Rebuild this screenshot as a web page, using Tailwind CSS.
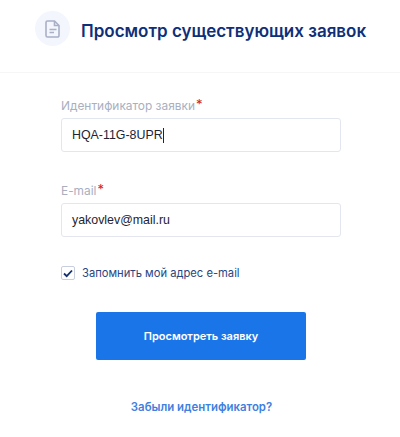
<!DOCTYPE html>
<html lang="ru">
<head>
    <meta charset="UTF-8">
    <meta name="viewport" content="width=device-width, initial-scale=1.0">
    <title>Просмотр существующих заявок</title>
    <script src="https://cdn.jsdelivr.net/npm/@tailwindcss/browser@4"></script>
</head>
<body class="bg-white font-['Inter',sans-serif] h-[437px] overflow-hidden">
    <header class="h-[73px] border-b border-[#f5f6f8] pl-[35px] pt-[11px] flex items-start">
        <div class="w-[35px] h-[35px] rounded-full bg-[#f3f6fd] flex items-center justify-center">
            <svg width="16" height="18" viewBox="0 0 16 18" fill="none" stroke="#a9b0c6" stroke-width="1.6">
                <path d="M2.5 1h7l4.5 4.5V15.5a1.5 1.5 0 0 1-1.5 1.5h-10A1.5 1.5 0 0 1 1 15.5V2.500A1.500 1.500 0 0 1 2.500 1z"/>
                <path d="M9.500 1v4.500H14"/>
                <path d="M4.500 9.500h7M4.500 12.500h4.500"/>
            </svg>
        </div>
        <h1 class="ml-[11px] mt-[9px] text-[17px] leading-[22px] font-semibold text-[#0f2f78] whitespace-nowrap">Просмотр существующих заявок</h1>
    </header>
    <form class="pl-[61px] w-[341px]">
        <label class="mt-[23px] flex items-start h-[22px] text-[11.9px] leading-[20px] text-[#a9afbf]">Идентификатор заявки<span class="text-[#d0202c] text-[13px] leading-[16px] ml-[1px]">*</span></label>
        <div class="h-[34px] border border-[#e4e6ef] rounded-[3px] pl-[10px] flex items-center text-[12.4px] text-[#1d2433] font-['Liberation_Sans',sans-serif]">HQA-11G-8UPR<span class="w-px h-[15px] bg-[#1d2433]"></span></div>
        <label class="mt-[29px] flex items-start h-[22px] text-[11.9px] leading-[20px] text-[#a9afbf]">E-mail<span class="text-[#d0202c] text-[13px] leading-[16px] ml-[1px]">*</span></label>
        <div class="h-[34px] border border-[#e4e6ef] rounded-[3px] pl-[10px] flex items-center text-[12.4px] text-[#1d2433] font-['Liberation_Sans',sans-serif]">yakovlev@mail.ru</div>
        <div class="mt-[28px] flex items-center h-[16px]">
            <span class="w-[14px] h-[14px] border border-[#c9cede] rounded-[2px] flex items-center justify-center">
                <svg width="10" height="9" viewBox="0 0 10 9" fill="none" stroke="#14306f" stroke-width="1.800"><path d="M1 4.500l2.700 2.700L9 1.500"/></svg>
            </span>
            <span class="ml-[7px] text-[11.2px] text-[#2a4580] whitespace-nowrap">Запомнить мой адрес e-mail</span>
        </div>
    </form>
    <div class="mt-[31px] flex flex-col items-center">
        <button type="button" class="ml-[2px] w-[210px] h-[48px] rounded-[2px] bg-[#1a76e8] text-white text-[11px] font-semibold">Просмотреть заявку</button>
        <a class="mt-[40px] ml-[3px] text-[11.4px] leading-[14px] font-semibold text-[#3f80e0]">Забыли идентификатор?</a>
    </div>
</body>
</html>
